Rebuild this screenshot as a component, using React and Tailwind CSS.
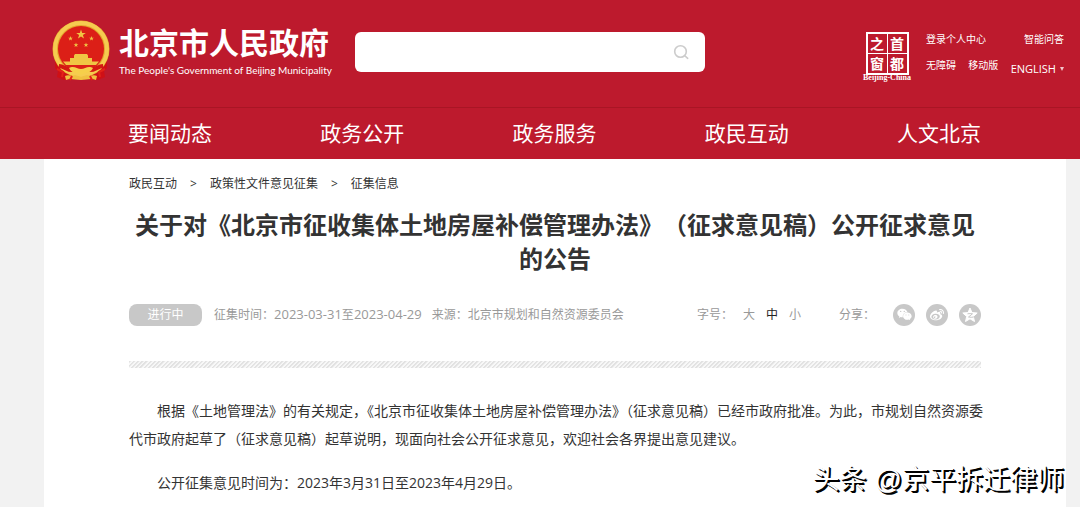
import React from "react";
import { FaWeixin, FaWeibo } from "react-icons/fa";

const NAV = ["要闻动态", "政务公开", "政务服务", "政民互动", "人文北京"];

function Emblem() {
  const star = "M0-5 1.2-1.6 4.8-1.6 1.9.6 3 4 0 1.9-3 4-1.9.6-4.8-1.6-1.2-1.6Z";
  return (
    <svg viewBox="0 0 60 62" className="h-[62px] w-[60px] shrink-0" aria-hidden="true">
      <path d="M4 38 4 48l3 3-1 6 7 3 17-2 17 2 7-3-1-6 3-3V38Z" fill="#cf1016" />
      <circle cx="30" cy="29" r="28.5" fill="#e3a62c" />
      <circle cx="30" cy="29" r="26" fill="none" stroke="#f6cb50" strokeWidth="4" />
      <circle cx="30" cy="29" r="23" fill="#dc1f17" />
      <g fill="#f0c544">
        <path d={star} transform="translate(30 14.500)" />
        <path d={star} transform="translate(19.500 18.500) scale(.5)" />
        <path d={star} transform="translate(40.500 18.500) scale(.5)" />
        <path d={star} transform="translate(25 25) scale(.5)" />
        <path d={star} transform="translate(35 25) scale(.5)" />
        <path d="M23 35.500l1-1.500h12l1 1.500v2.500h4v4H19v-4h4ZM12 41.500h36l-3 3.500H15Z" />
      </g>
      <path d="M8 46c5 0 9 5 14 4M52 46c-5 0-9 5-14 4" fill="none" stroke="#d41912" strokeWidth="4" />
      <path d="M18 48c5-3 8 1 12 1s7-4 12-1c-2 4-5 5-8 5l-4 2-4-2c-3 0-6-1-8-5Z" fill="#f6cf4a" />
      <path d="M14 56c4-2 7 1 10-1l6 2 6-2c3 2 6-1 10 1l-1 4c-5-2-9 0-15 0s-10-2-15 0Z" fill="#f0c040" />
      <path d="M6 49l6 3-1 5M54 49l-6 3 1 5M21 56l-2 4M39 56l2 4" fill="none" stroke="#e32318" strokeWidth="2" />
    </svg>
  );
}

function SearchIcon() {
  return (
    <svg viewBox="0 0 16 16" className="size-4" fill="none" stroke="#ccc" strokeWidth="1.6" aria-hidden="true">
      <circle cx="7.500" cy="7.500" r="5.800" />
      <path d="m11.500 11.500 3.200 2.800" strokeLinecap="round" />
    </svg>
  );
}

function QzoneIcon() {
  return (
    <svg viewBox="0 0 16 16" className="size-4" aria-hidden="true">
      <path
        d="M8 1 10 5.600 15.200 6 11.300 9.400 12.500 14.500 8 11.800 3.500 14.500 4.700 9.400.8 6 6 5.600Z"
        fill="#fff"
        stroke="#fff"
        strokeLinejoin="round"
      />
      <path d="M5.500 6.800c2-.4 3.500-.3 5 0L6.500 10c2 .4 3.500.4 5.200 0" fill="none" stroke="#c8c8c8" />
    </svg>
  );
}

function CapitalWindowSeal() {
  return (
    <a href="#capital" className="flex w-[46px] flex-col items-center text-white">
      <span className="grid grid-cols-2 gap-px border-2 border-white bg-white font-['Noto_Sans_CJK_SC',sans-serif] text-[14px] leading-[18px] font-bold">
        {["之", "首", "窗", "都"].map((c) => (
          <span key={c} className="h-[19px] w-[19px] bg-[#bd1a2d] text-center">
            {c}
          </span>
        ))}
      </span>
      <span className="font-['Liberation_Serif',serif] text-[8px] leading-[6px] font-bold whitespace-nowrap">
        Beijing-China
      </span>
    </a>
  );
}

export default function App() {
  return (
    <div className="relative min-h-screen overflow-hidden bg-[#f2f2f2] font-['Open_Sans','Noto_Sans_CJK_SC',sans-serif] text-[#333]">
      <header className="bg-[#bd1a2d] text-white">
        <div className="flex h-[107px] items-start pr-4 pl-[51px]">
          <a href="#home" className="flex items-center pt-5">
            <Emblem />
            <span className="ml-2 flex flex-col">
              <span className="font-['Noto_Sans_CJK_SC',sans-serif] text-[30px] leading-[34px] font-bold whitespace-nowrap">
                北京市人民政府
              </span>
              <span className="mt-1 font-['Lato',sans-serif] text-[10px] leading-[16px] whitespace-nowrap">
                The People's Government of Beijing Municipality
              </span>
            </span>
          </a>
          <form className="mt-8 ml-[23px] flex h-10 w-[350px] items-center rounded-md bg-white pr-4" onSubmit={(e) => e.preventDefault()}>
            <input type="search" aria-label="搜索" className="h-full min-w-0 flex-1 bg-transparent px-4 text-sm text-[#333] outline-none" />
            <button type="submit" aria-label="搜索">
              <SearchIcon />
            </button>
          </form>
          <div className="mt-8 ml-auto flex gap-4">
            <CapitalWindowSeal />
            <div className="flex w-[138px] flex-col text-[10px] leading-[14px] whitespace-nowrap">
              <div className="flex justify-between">
                <a href="#login">登录个人中心</a>
                <a href="#ask">智能问答</a>
              </div>
              <div className="mt-3 flex items-start justify-between">
                <a href="#accessible">无障碍</a>
                <a href="#mobile">移动版</a>
                <a href="#english" className="flex items-center gap-1 pt-1 text-[11px]">
                  ENGLISH
                  <svg viewBox="0 0 4 4" className="size-1" aria-hidden="true">
                    <path d="M0 0h4L2 4Z" fill="#f3c5ca" />
                  </svg>
                </a>
              </div>
            </div>
          </div>
        </div>
        <nav className="border-t border-[#a91524] pr-[99px] pl-32">
          <ul className="flex h-[51px] items-center justify-between text-[21px]">
            {NAV.map((n) => (
              <li key={n}>
                <a href="#nav">{n}</a>
              </li>
            ))}
          </ul>
        </nav>
      </header>

      <main className="mr-3.5 ml-11 min-h-[348px] bg-white px-[85px] pt-[13px]">
        <nav aria-label="面包屑" className="flex gap-[13px] text-xs leading-6">
          <a href="#1">政民互动</a>
          <span>&gt;</span>
          <a href="#2">政策性文件意见征集</a>
          <span>&gt;</span>
          <a href="#3">征集信息</a>
        </nav>
        <h1 className="mt-[11px] text-center font-['Noto_Sans_CJK_SC',sans-serif] text-2xl leading-[34px] font-bold [text-spacing-trim:space-all]">
          关于对《北京市征收集体土地房屋补偿管理办法》（征求意见稿）公开征求意见的公告
        </h1>
        <div className="mt-7 flex items-center text-xs leading-[22px] whitespace-nowrap text-[#999]">
          <span className="w-[73px] rounded-lg bg-[#c8c8c8] text-center text-white">进行中</span>
          <span className="ml-3">
            征集时间：<span className="text-[13px]">2023-03-31</span>至<span className="text-[13px]">2023-04-29</span>
          </span>
          <span className="ml-2.5">来源：北京市规划和自然资源委员会</span>
          <div className="ml-auto flex items-center">
            <span>字号：</span>
            <div className="ml-2.5 flex gap-[11px]">
              <button type="button">大</button>
              <button type="button" className="text-[#222]">中</button>
              <button type="button">小</button>
            </div>
            <span className="ml-[38px]">分享：</span>
            <div className="ml-[18px] flex gap-[11px]">
              <button type="button" aria-label="微信" className="flex size-[22px] items-center justify-center rounded-full bg-[#c8c8c8] text-white">
                <FaWeixin size={15} />
              </button>
              <button type="button" aria-label="微博" className="flex size-[22px] items-center justify-center rounded-full bg-[#c8c8c8] text-white">
                <FaWeibo size={14} />
              </button>
              <button type="button" aria-label="QQ空间" className="flex size-[22px] items-center justify-center rounded-full bg-[#c8c8c8]">
                <QzoneIcon />
              </button>
            </div>
          </div>
        </div>
        <div className="mt-[35px] h-[7px] bg-[repeating-linear-gradient(135deg,#e2e2e2_0px,#e2e2e2_1px,#f8f8f8_2px,#f8f8f8_3px)]" />
        <article className="-mr-2 mt-[29px] text-sm leading-7">
          <p className="indent-[2em]">
            根据《土地管理法》的有关规定，《北京市征收集体土地房屋补偿管理办法》（征求意见稿）已经市政府批准。为此，市规划自然资源委代市政府起草了（征求意见稿）起草说明，现面向社会公开征求意见，欢迎社会各界提出意见建议。
          </p>
          <p className="mt-4 indent-[2em]">公开征集意见时间为：2023年3月31日至2023年4月29日。</p>
        </article>
      </main>

      <div className="absolute right-4 bottom-2 flex gap-2 font-['Liberation_Sans','Noto_Sans_CJK_SC',sans-serif] text-[27px] leading-[38px] whitespace-nowrap text-white [text-shadow:1px_1px_0_#000,2px_2px_0_#000]">
        <span>头条</span>
        <span>@京平拆迁律师</span>
      </div>
    </div>
  );
}
